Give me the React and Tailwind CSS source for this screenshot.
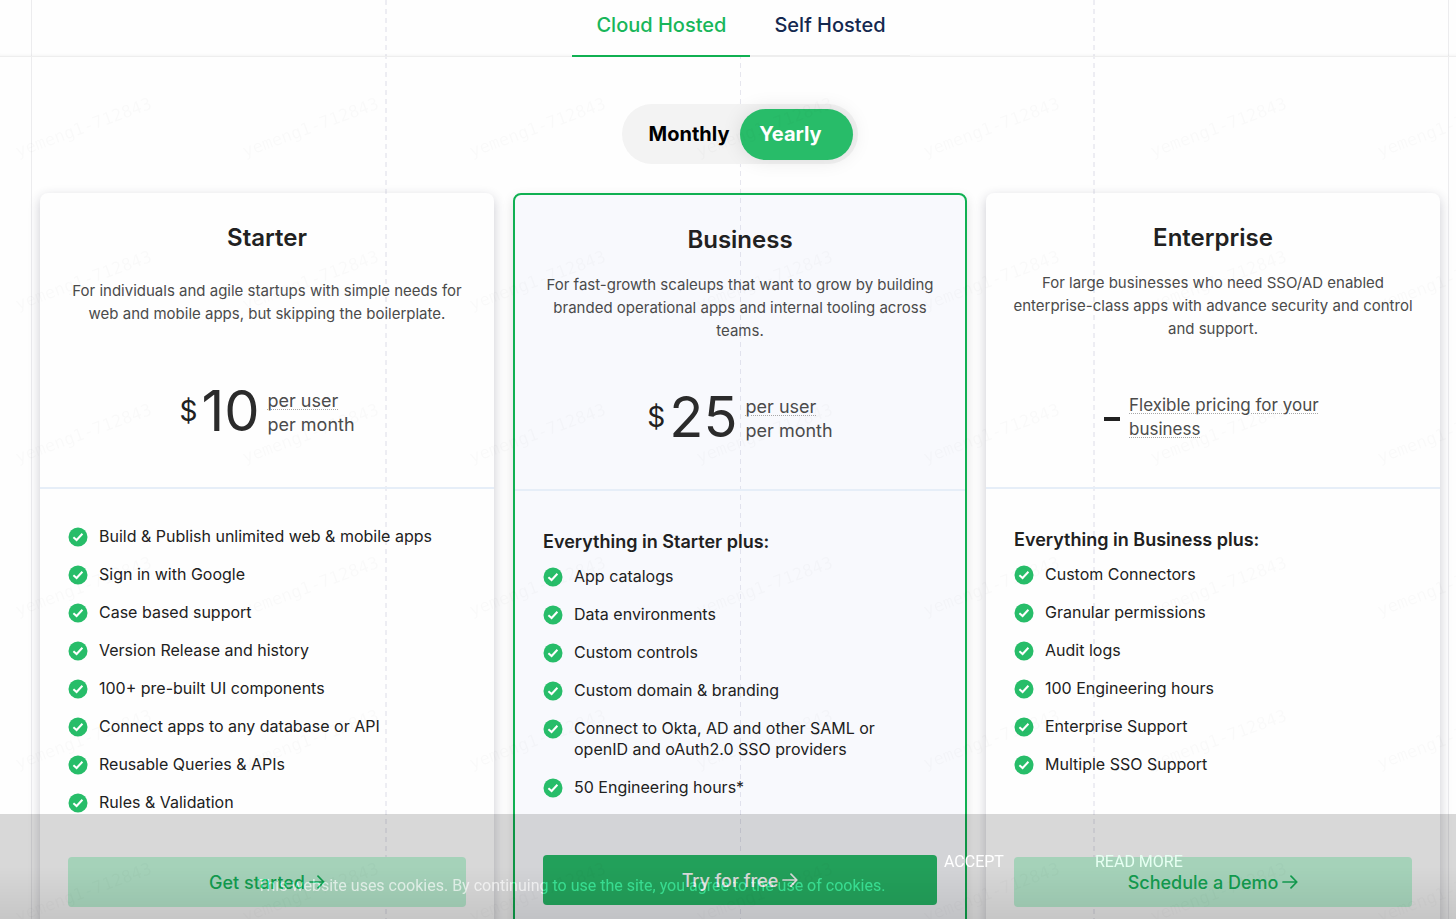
import { useState } from 'react';

const TABS = ['Cloud Hosted', 'Self Hosted'];

const PLANS = [
  {
    name: 'Starter',
    description:
      'For individuals and agile startups with simple needs for web and mobile apps, but skipping the boilerplate.',
    price: '10',
    features: [
      'Build & Publish unlimited web & mobile apps',
      'Sign in with Google',
      'Case based support',
      'Version Release and history',
      '100+ pre-built UI components',
      'Connect apps to any database or API',
      'Reusable Queries & APIs',
      'Rules & Validation',
    ],
    cta: 'Get started',
    descriptionClass: 'h-16 pt-2',
  },
  {
    name: 'Business',
    description:
      'For fast-growth scaleups that want to grow by building branded operational apps and internal tooling across teams.',
    price: '25',
    heading: 'Everything in Starter plus:',
    features: [
      'App catalogs',
      'Data environments',
      'Custom controls',
      'Custom domain & branding',
      'Connect to Okta, AD and other SAML or openID and oAuth2.0 SSO providers',
      '50 Engineering hours*',
    ],
    cta: 'Try for free',
    descriptionClass: 'h-17',
    featured: true,
  },
  {
    name: 'Enterprise',
    description:
      'For large businesses who need SSO/AD enabled enterprise-class apps with advance security and control and support.',
    heading: 'Everything in Business plus:',
    features: [
      'Custom Connectors',
      'Granular permissions',
      'Audit logs',
      '100 Engineering hours',
      'Enterprise Support',
      'Multiple SSO Support',
    ],
    cta: 'Schedule a Demo',
    descriptionClass: 'h-17',
  },
];

const dottedClass =
  'underline decoration-dotted decoration-[#a8a8a8] decoration-1 underline-offset-2';

const dashClass =
  'ml-auto bg-[repeating-linear-gradient(to_bottom,#e6e6ee_0px,#e6e6ee_5px,transparent_5px,transparent_9px)]';

function CheckIcon() {
  return (
    <svg className="mt-px size-5 shrink-0" viewBox="0 0 20 20" aria-hidden="true">
      <circle cx="10" cy="10" r="9.5" fill="#27bd69" />
      <path d="M5.4 10.2 8.6 13 14.4 6.8" fill="none" stroke="#fff" strokeWidth="2" />
    </svg>
  );
}

function ArrowIcon() {
  return (
    <svg className="h-4 w-4" viewBox="0 0 16 16" fill="none" stroke="currentColor" strokeWidth="1.7" aria-hidden="true">
      <path d="M1 8h13.4M9 2.2 14.8 8 9 13.8" strokeLinecap="round" strokeLinejoin="round" />
    </svg>
  );
}

function GuideLines() {
  return (
    <div
      className="pointer-events-none absolute inset-y-0 right-[7px] left-[31px] grid grid-cols-4 border-x border-[#ececee]"
      aria-hidden="true"
    >
      <span className={`${dashClass} -mr-px w-0.5 opacity-70`} />
      <span className={`${dashClass} -mr-px w-px`} />
      <span className={`${dashClass} -mr-px w-0.5 opacity-70`} />
    </div>
  );
}

function Watermark() {
  return (
    <div
      className="pointer-events-none fixed inset-0 z-30 grid auto-rows-[153px] grid-cols-[repeat(7,227px)] overflow-hidden font-['DejaVu_Sans_Mono',monospace] text-[17px] text-black/[0.02]"
      aria-hidden="true"
    >
      {Array.from({ length: 42 }, (_, i) => (
        <span key={i} className="flex items-end pb-[13px] pl-3">
          <span className="-rotate-20">yemeng1-712843</span>
        </span>
      ))}
    </div>
  );
}

function PlanPrice({ price }) {
  if (!price) {
    return (
      <div className="flex h-15 items-center justify-center gap-[9px]">
        <span className="mt-2 h-1 w-4 bg-[#212121]" />
        <p className={`w-[193px] pt-1 text-left text-[17px] leading-6 text-[#4b4b4b] ${dottedClass}`}>
          Flexible pricing for your business
        </p>
      </div>
    );
  }

  return (
    <div className="flex h-15 items-center justify-center">
      <span className="mr-1 text-[28px] leading-none text-[#212121]">$</span>
      <span className="mr-2 text-[56px] leading-none text-[#2b2b2b]">{price}</span>
      <p className="pt-1 text-left text-[18px] leading-6 text-[#4b4b4b]">
        <span className={dottedClass}>per user</span>
        <br />
        per month
      </p>
    </div>
  );
}

function PlanCard({ plan }) {
  return (
    <article
      className={`flex flex-col rounded-lg pb-10 ${
        plan.featured
          ? 'border-2 border-[#10b052] bg-[#5a78dc]/4 shadow-[0_4px_12px_rgba(0,0,0,0.12)]'
          : 'shadow-[0_4px_12px_rgba(40,40,70,0.24)]'
      }`}
    >
      <header className="h-[296px] border-b-2 border-[#e6eef8] px-5 pt-[29px] text-center">
        <h2 className="text-2xl leading-8 font-semibold text-[#212121]">{plan.name}</h2>
        <p className={`mt-[17px] text-[15px] leading-[23px] text-[#4b4b4b] ${plan.descriptionClass}`}>
          {plan.description}
        </p>
        <div className="mt-[46px]">
          <PlanPrice price={plan.price} />
        </div>
      </header>

      <div className="flex grow flex-col px-7 pt-[37px]">
        {plan.heading && (
          <h3 className="mb-[10px] text-[18px] leading-7 font-semibold text-[#212121]">{plan.heading}</h3>
        )}
        <ul className="mb-11 grid gap-[17px] pr-7 text-[16px] leading-[21px] text-[#212121]">
          {plan.features.map((feature) => (
            <li key={feature} className="flex items-start gap-[11px]">
              <CheckIcon />
              {feature}
            </li>
          ))}
        </ul>
        <button
          type="button"
          className={`mt-auto flex h-[50px] items-center justify-center gap-1 rounded text-[18px] font-medium ${
            plan.featured ? 'bg-[#29bc6a] text-white' : 'bg-[#c2f7da] text-[#16b75d]'
          }`}
        >
          {plan.cta}
          <ArrowIcon />
        </button>
      </div>
    </article>
  );
}

function CookieBar() {
  return (
    <>
      <div className="fixed inset-x-0 bottom-0 z-40 h-[105px] bg-black/15 font-[Roboto,sans-serif] text-[16px] leading-6 text-white">
        <div className="h-full bg-linear-to-b from-transparent from-50% to-black/8">
          <div className="mx-auto flex max-w-[942px] justify-end pt-9">
            <button type="button" className="w-[151px] text-left">
              ACCEPT
            </button>
            <a href="#cookies" className="w-[104px] text-[#e6fff2]">
              READ MORE
            </a>
          </div>
        </div>
      </div>
      {/* the notice blends into whatever scrolls under the bar */}
      <div className="pointer-events-none fixed inset-x-0 bottom-0 z-50 h-[105px] font-[Roboto,sans-serif] text-[16px] leading-6 text-white/65 mix-blend-overlay">
        <p className="mx-auto max-w-[942px] pt-15">
          This website uses cookies. By continuing to use the site, you agree to the use of cookies.
        </p>
      </div>
    </>
  );
}

export default function App() {
  const [tab, setTab] = useState('Cloud Hosted');
  const [billing, setBilling] = useState('Yearly');

  return (
    <div className="relative min-h-screen bg-[#fefefe] font-[Inter,sans-serif]">
      <GuideLines />
      <Watermark />

      <nav className="relative flex h-[57px] justify-center border-b border-[#eeeeee] pl-[26px] shadow-[inset_0_-4px_4px_-4px_rgba(0,0,0,0.06)]">
        {TABS.map((name) => (
          <button
            key={name}
            type="button"
            onClick={() => setTab(name)}
            className={`-mb-px border-b-2 bg-[#fefefe] px-6 pb-[6px] text-[20px] font-medium ${
              tab === name ? 'border-[#10b052] text-[#18b65a]' : 'border-[#eeeeee] text-[#14284f]'
            }`}
          >
            {name}
          </button>
        ))}
      </nav>

      <main className="relative mr-[7px] ml-[31px] px-[9px] pb-12">
        <div className="mx-auto mt-[47px] flex h-[60px] w-[236px] items-center rounded-full bg-[#f3f3f3] text-[20px] font-bold">
          {['Monthly', 'Yearly'].map((name) => (
            <button
              key={name}
              type="button"
              onClick={() => setBilling(name)}
              className={`h-[51px] rounded-full ${name === 'Monthly' ? 'w-[118px] pl-4' : 'w-[113px] pr-3'} ${
                billing === name ? 'bg-[#28bc69] text-white shadow-[0_0_20px_rgba(0,0,0,0.1)]' : 'text-black'
              }`}
            >
              {name}
            </button>
          ))}
        </div>

        <section className="mt-[29px] grid grid-cols-3 gap-[19px]">
          {PLANS.map((plan) => (
            <PlanCard key={plan.name} plan={plan} />
          ))}
        </section>
      </main>

      <CookieBar />
    </div>
  );
}
